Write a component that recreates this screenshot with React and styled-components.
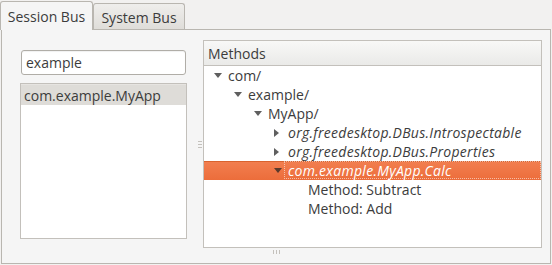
import React from 'react';
import styled, { createGlobalStyle } from 'styled-components';

const Global = createGlobalStyle`
  html, body { margin: 0; padding: 0; background: #f2f1f0; }
  body {
    font-family: "Open Sans", "DejaVu Sans", sans-serif;
    font-size: 14px;
    color: #3c3c3c;
  }
  #root { width: 552px; height: 265px; overflow: hidden; }
`;

const Window = styled.div`
  width: 552px;
  height: 265px;
  background: #f2f1f0;
  display: flex;
  flex-direction: column;
`;

const TabBar = styled.div`
  display: flex;
  align-items: flex-end;
  height: 29px;
  flex: none;
  position: relative;
  z-index: 1;
`;

const Tab = styled.div`
  box-sizing: border-box;
  display: flex;
  align-items: center;
  justify-content: center;
  border: 1px solid #b9b6b0;
  border-bottom: none;
  border-radius: 3px 3px 0 0;
  white-space: nowrap;
  ${p => p.$active ? `
    width: 93px;
    height: 29px;
    margin-bottom: -1px;
    background: #f5f5f5;
    padding-top: 1px;
  ` : `
    width: 92px;
    height: 26px;
    background: linear-gradient(#efeeec, #dfddd9);
    padding-top: 1px;
  `}
`;

const Page = styled.div`
  box-sizing: border-box;
  margin-left: 1px;
  width: 550px;
  height: 235px;
  border: 1px solid #b9b6b0;
  background: #f5f5f5;
  display: flex;
  flex-direction: column;
`;

const TopArea = styled.div`
  display: flex;
  margin-top: 10px;
  height: 208px;
  flex: none;
`;

const LeftPane = styled.div`
  box-sizing: border-box;
  width: 195px;
  padding: 10px 10px 9px 18px;
  display: flex;
  flex-direction: column;
  gap: 8px;
`;

const Entry = styled.div`
  box-sizing: border-box;
  margin: 0 1px;
  height: 25px;
  border: 1px solid #b0ada7;
  border-radius: 3px;
  background: #fff;
  box-shadow: inset 0 1px 1px rgba(0,0,0,0.06);
  display: flex;
  align-items: center;
  padding-left: 4px;
  padding-bottom: 1px;
`;

const ListBox = styled.div`
  box-sizing: border-box;
  flex: 1;
  border: 1px solid #c3c0bb;
  background: #fff;
`;

const ListRow = styled.div`
  height: 20px;
  display: flex;
  align-items: center;
  padding-left: 3px;
  white-space: nowrap;
  background: ${p => (p.$selected ? '#dedcd8' : 'transparent')};
  border-top: ${p => (p.$selected ? '1px solid #e6e4e1' : 'none')};
`;

const VHandle = styled.div`
  width: 6px;
  display: flex;
  flex-direction: column;
  align-items: center;
  justify-content: center;
  gap: 2px;
`;

const HDash = styled.span`
  width: 4px;
  height: 1px;
  background: #c4c1bc;
`;

const RightPane = styled.div`
  box-sizing: border-box;
  width: 339px;
  border: 1px solid #c3c0bb;
  background: #fff;
  display: flex;
  flex-direction: column;
`;

const Header = styled.div`
  height: 24px;
  flex: none;
  display: flex;
  align-items: center;
  padding-left: 4px;
  background: linear-gradient(#f8f8f7, #eaeae8);
  border-bottom: 1px solid #c3c0bb;
`;

const Row = styled.div`
  position: relative;
  height: 19px;
  display: flex;
  align-items: center;
  padding-left: ${p => 10 + p.$depth * 20}px;
  white-space: nowrap;
  ${p => p.$selected ? `
    background: linear-gradient(#f27f50, #ec6d3b);
    box-shadow: inset 0 1px 0 #d9632f;
    color: #ffffff;
  ` : ''}
`;

const Expander = styled.span`
  width: 14px;
  flex: none;
  display: flex;
  align-items: center;
`;

const Label = styled.span`
  font-style: ${p => (p.$italic ? 'italic' : 'normal')};
  letter-spacing: ${p => (p.$italic ? '0.28px' : '0')};
`;

const Focus = styled.span`
  position: absolute;
  top: 0;
  bottom: 1px;
  right: 0;
  left: ${p => p.$left}px;
  border: 1px dotted rgba(255, 255, 255, 0.55);
  pointer-events: none;
`;

const BottomHandle = styled.div`
  height: 7px;
  display: flex;
  justify-content: center;
  align-items: center;
  gap: 2px;
`;

const VDash = styled.span`
  width: 1px;
  height: 4px;
  background: #c4c1bc;
`;

const Arrow = ({ open, dark }) => {
  const c = dark ? '#5a3a2c' : '#5f5f5f';
  return open ? (
    <svg width="8" height="5" viewBox="0 0 8 5"><polygon points="0,0 8,0 4,5" fill={c} /></svg>
  ) : (
    <svg width="5" height="8" viewBox="0 0 5 8"><polygon points="0,0 5,4 0,8" fill={c} /></svg>
  );
};

const tree = [
  { depth: 0, label: 'com/', exp: 'open' },
  { depth: 1, label: 'example/', exp: 'open' },
  { depth: 2, label: 'MyApp/', exp: 'open' },
  { depth: 3, label: 'org.freedesktop.DBus.Introspectable', exp: 'closed', italic: true },
  { depth: 3, label: 'org.freedesktop.DBus.Properties', exp: 'closed', italic: true },
  { depth: 3, label: 'com.example.MyApp.Calc', exp: 'open', italic: true, selected: true },
  { depth: 4, label: 'Method: Subtract' },
  { depth: 4, label: 'Method: Add' },
];

export default function App() {
  return (
    <Window>
      <Global />
      <TabBar>
        <Tab $active>Session Bus</Tab>
        <Tab>System Bus</Tab>
      </TabBar>
      <Page>
        <TopArea>
          <LeftPane>
            <Entry>example</Entry>
            <ListBox>
              <ListRow $selected>com.example.MyApp</ListRow>
            </ListBox>
          </LeftPane>
          <VHandle>
            <HDash /><HDash /><HDash />
          </VHandle>
          <RightPane>
            <Header>Methods</Header>
            {tree.map((n, i) => (
              <Row key={i} $depth={n.depth} $selected={n.selected}>
                <Expander>
                  {n.exp && <Arrow open={n.exp === 'open'} dark={n.selected} />}
                </Expander>
                <Label $italic={n.italic}>{n.label}</Label>
                {n.selected && <Focus $left={10 + n.depth * 20 + 10} />}
              </Row>
            ))}
          </RightPane>
        </TopArea>
        <BottomHandle>
          <VDash /><VDash /><VDash />
        </BottomHandle>
      </Page>
    </Window>
  );
}
